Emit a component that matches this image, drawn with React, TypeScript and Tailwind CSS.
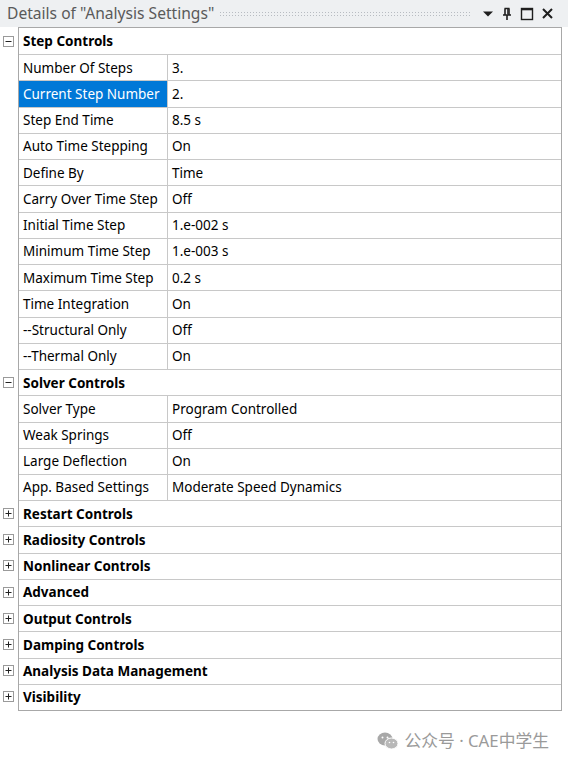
import React from 'react';

type Row = { name: string; value: string; selected?: boolean };
type Group = { title: string; open: boolean; rows?: Row[] };

const groups: Group[] = [
    {
        title: 'Step Controls',
        open: true,
        rows: [
            { name: 'Number Of Steps', value: '3.' },
            { name: 'Current Step Number', value: '2.', selected: true },
            { name: 'Step End Time', value: '8.5 s' },
            { name: 'Auto Time Stepping', value: 'On' },
            { name: 'Define By', value: 'Time' },
            { name: 'Carry Over Time Step', value: 'Off' },
            { name: 'Initial Time Step', value: '1.e-002 s' },
            { name: 'Minimum Time Step', value: '1.e-003 s' },
            { name: 'Maximum Time Step', value: '0.2 s' },
            { name: 'Time Integration', value: 'On' },
            { name: '--Structural Only', value: 'Off' },
            { name: '--Thermal Only', value: 'On' },
        ],
    },
    {
        title: 'Solver Controls',
        open: true,
        rows: [
            { name: 'Solver Type', value: 'Program Controlled' },
            { name: 'Weak Springs', value: 'Off' },
            { name: 'Large Deflection', value: 'On' },
            { name: 'App. Based Settings', value: 'Moderate Speed Dynamics' },
        ],
    },
    { title: 'Restart Controls', open: false },
    { title: 'Radiosity Controls', open: false },
    { title: 'Nonlinear Controls', open: false },
    { title: 'Advanced', open: false },
    { title: 'Output Controls', open: false },
    { title: 'Damping Controls', open: false },
    { title: 'Analysis Data Management', open: false },
    { title: 'Visibility', open: false },
];

function ToggleBox({ open }: { open: boolean }) {
    return (
        <div className="w-[11px] h-[11px] border border-[#9a9a9a] bg-white flex items-center justify-center">
            <svg width="9" height="9" viewBox="0 0 9 9">
                <line x1="1.5" y1="4.5" x2="7.5" y2="4.5" stroke="#222" strokeWidth="1" />
                {!open && <line x1="4.5" y1="1.5" x2="4.5" y2="7.5" stroke="#222" strokeWidth="1" />}
            </svg>
        </div>
    );
}

export default function App() {
    return (
        <div
            className="w-[568px] h-[764px] bg-white flex flex-col text-[13.5px] text-black"
            style={{ fontFamily: '"Noto Sans", "Noto Sans CJK SC", sans-serif' }}
        >
            {/* Title bar */}
            <div className="h-[27px] bg-[#eef0f2] flex items-center pl-[7px] pr-[14px] shrink-0">
                <span className="text-[#5a5a5a] text-[15.6px] whitespace-nowrap">Details of "Analysis Settings"</span>
                <div
                    className="flex-1 h-[6px] ml-[5px] mr-[10px]"
                    style={{
                        backgroundImage: 'radial-gradient(#b8bcc2 0.7px, transparent 0.8px)',
                        backgroundSize: '3px 3px',
                    }}
                />
                <div className="flex items-center gap-[7px]">
                    <svg width="12" height="12" viewBox="0 0 12 12">
                        <path d="M1 3.5 L11 3.5 L6 8.5 Z" fill="#1e1e1e" />
                    </svg>
                    <svg width="12" height="14" viewBox="0 0 12 14">
                        <path d="M3.5 1.5 H8.5 M4 1.5 V7.5 M8 1.5 V7.5 M2 8 H10 M6 8 V13" stroke="#1e1e1e" strokeWidth="1.6" fill="none" />
                        <path d="M6.8 2 V7.5" stroke="#1e1e1e" strokeWidth="1.2" />
                    </svg>
                    <svg width="14" height="14" viewBox="0 0 14 14">
                        <rect x="1.5" y="1.5" width="11" height="11" stroke="#1e1e1e" strokeWidth="1.4" fill="none" />
                        <line x1="1.5" y1="2.5" x2="12.5" y2="2.5" stroke="#1e1e1e" strokeWidth="1.6" />
                    </svg>
                    <svg width="13" height="13" viewBox="0 0 13 13">
                        <path d="M2 2 L11 11 M11 2 L2 11" stroke="#1e1e1e" strokeWidth="2" />
                    </svg>
                </div>
            </div>

            {/* Grid */}
            <div className="flex pr-[6px]">
                <div className="w-[18px] shrink-0 pt-[1px]">
                    {groups.map((g) => (
                        <React.Fragment key={g.title}>
                            <div className="h-[26.24px] flex items-center pl-[3px]">
                                <ToggleBox open={g.open} />
                            </div>
                            {g.open && g.rows?.map((r) => <div key={r.name} className="h-[26.24px]" />)}
                        </React.Fragment>
                    ))}
                </div>
                <div className="flex-1 border border-[#a8a8a8] bg-white">
                    {groups.map((g, gi) => (
                        <React.Fragment key={g.title}>
                            <div
                                className={`h-[26.24px] flex items-center pl-[4px] font-bold ${gi === 0 ? '' : 'border-t border-[#c8c8c8]'}`}
                            >
                                {g.title}
                            </div>
                            {g.open &&
                                g.rows?.map((r) => (
                                    <div key={r.name} className="h-[26.24px] flex border-t border-[#c8c8c8]">
                                        <div
                                            className={`w-[149px] shrink-0 flex items-center pl-[4px] border-r border-[#c8c8c8] whitespace-nowrap ${r.selected ? 'bg-[#0078d7] text-white' : ''}`}
                                        >
                                            {r.name}
                                        </div>
                                        <div className="flex-1 flex items-center pl-[4px]">{r.value}</div>
                                    </div>
                                ))}
                        </React.Fragment>
                    ))}
                </div>
            </div>

            {/* Watermark */}
            <div className="flex-1 flex justify-end items-center pr-[19px] pt-[6px]">
                <div className="flex items-center gap-[5px] text-[#9a9a9a] text-[16.8px]">
                    <svg width="22" height="18" viewBox="0 0 22 18">
                        <ellipse cx="8" cy="7" rx="7.5" ry="6.5" fill="#a8a8a8" />
                        <ellipse cx="14.5" cy="11.5" rx="6.5" ry="5.5" fill="#b8b8b8" stroke="white" strokeWidth="1" />
                        <circle cx="5.5" cy="5.5" r="1" fill="white" />
                        <circle cx="10.5" cy="5.5" r="1" fill="white" />
                        <circle cx="12.5" cy="10.5" r="0.8" fill="white" />
                        <circle cx="16.5" cy="10.5" r="0.8" fill="white" />
                    </svg>
                    <span>公众号 · CAE中学生</span>
                </div>
            </div>
        </div>
    );
}
